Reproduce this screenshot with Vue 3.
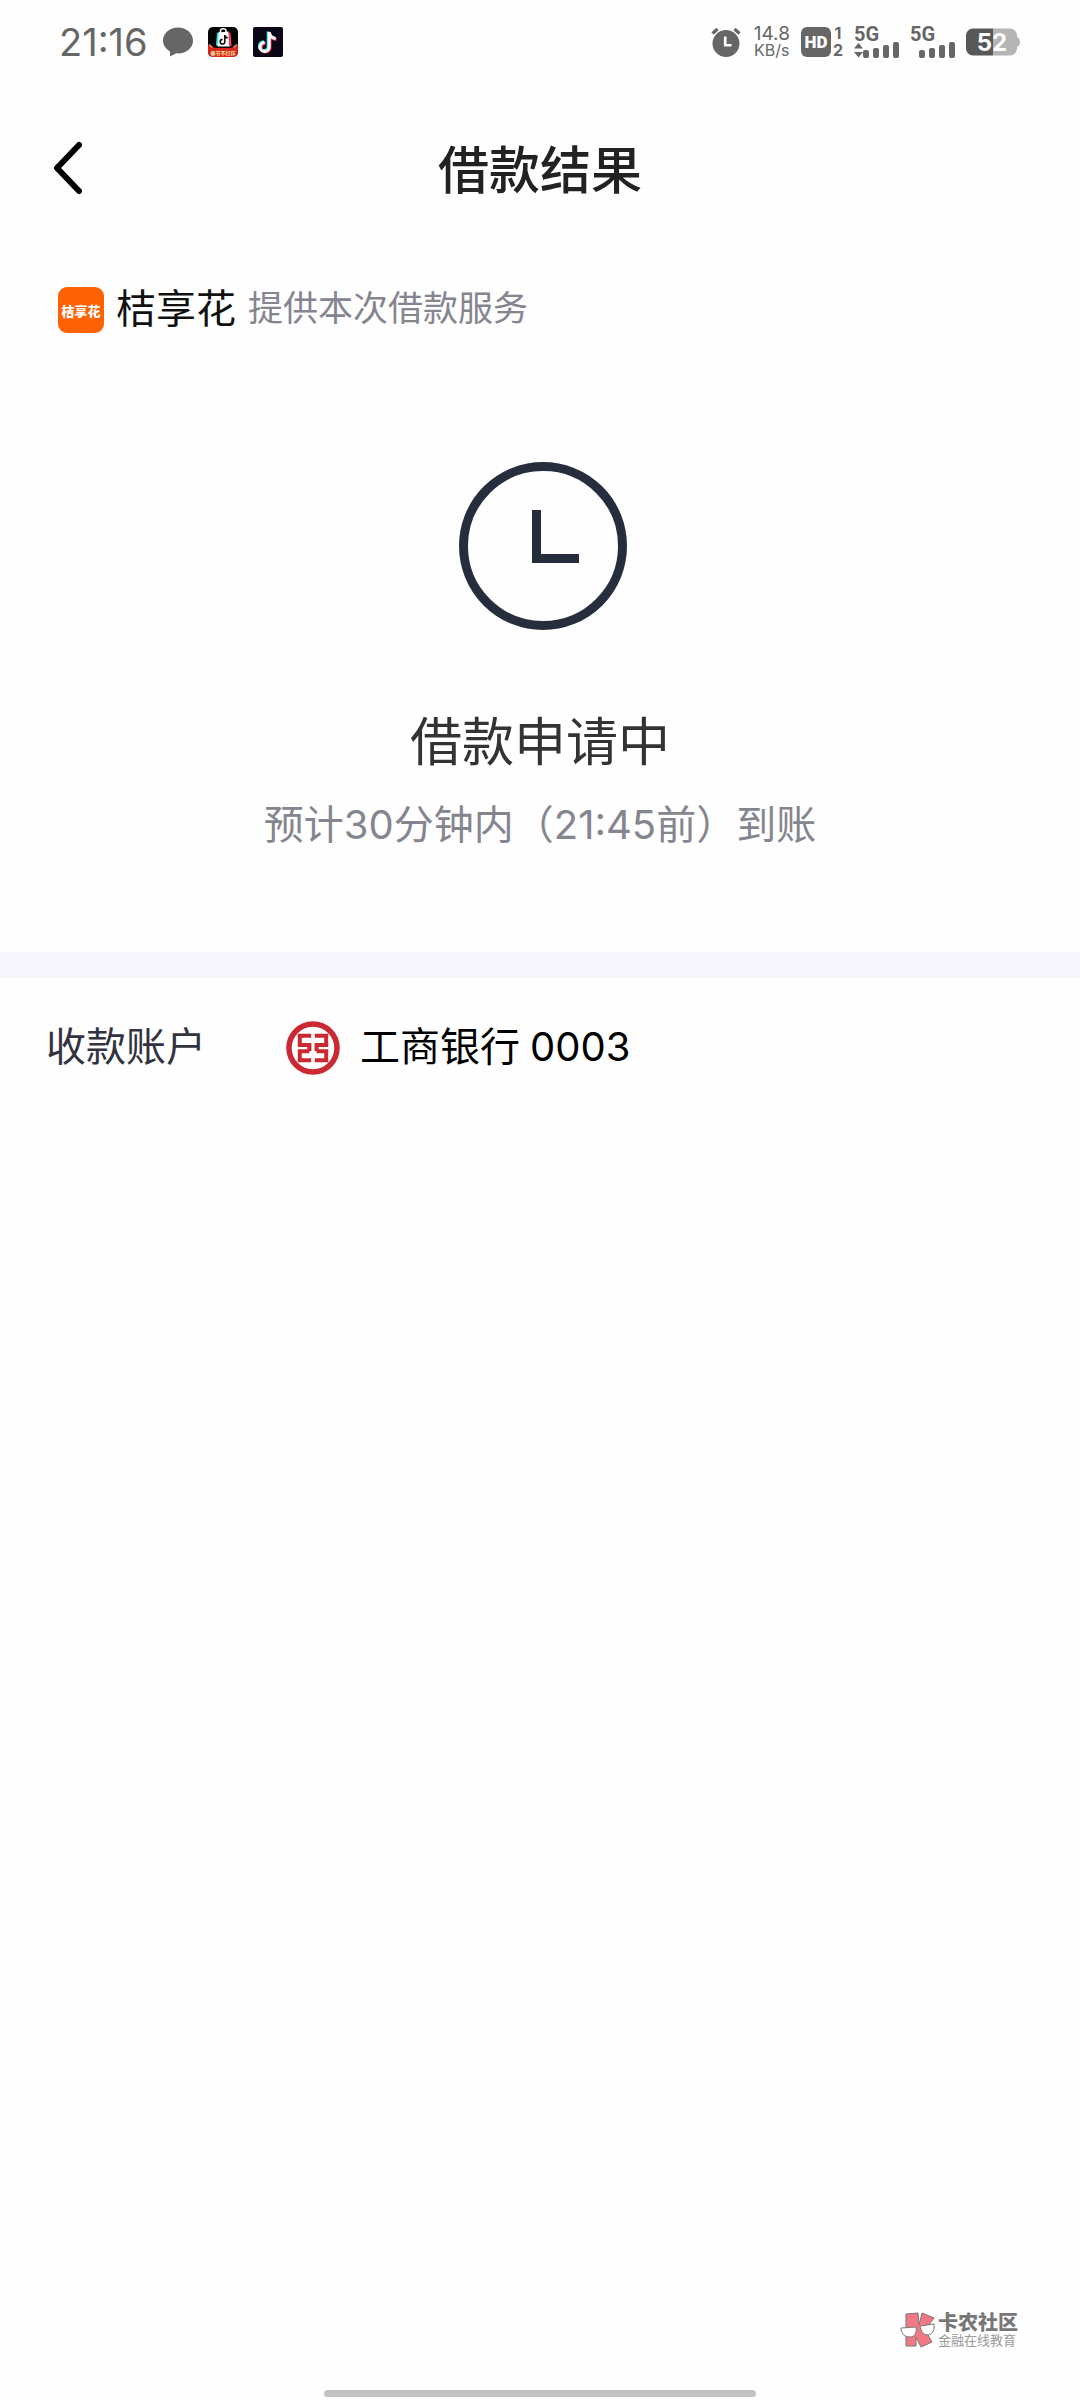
<template>
    <div class="page">
        <div class="status-bar">
            <div class="status-left">
                <span class="time">21:16</span>
                <svg class="app-icon" viewBox="0 0 30 30">
                    <path d="M15 0.5C6.700.5 0 6.300 0 13.500c0 4.500 2.700 8.500 7 10.900V29.500l6.300-3.200C22.600 27.100 30 21.500 30 13.500 30 6.300 23.300.5 15 .5z" fill="#666" />
                </svg>
                <svg class="app-icon" viewBox="0 0 30 30">
                    <rect width="30" height="30" rx="5" fill="#050505" />
                    <path d="M9 6l3-1.500 1 14H8z" fill="#35e6e0" />
                    <path d="M11 5.500l9.500-1 1.500 15H9.500z" fill="#fff" />
                    <path d="M20.500 5l2 1 1 13h-2.500z" fill="#ff3b62" />
                    <path d="M12.500 6V3.500c0-2 5.500-2.500 5.500 0V5.500" fill="none" stroke="#fff" stroke-width="1.500" />
                    <path d="M16.800 8v6.700a2.300 2.300 0 1 1-2.300-2.300M16.800 8.500c.5 1.500 1.500 2.200 3 2.400" fill="none" stroke="#111" stroke-width="1.600" />
                    <path d="M0 18c3 2.500 7 3 15 3s12-.5 15-3V25a5 5 0 0 1-5 5H5a5 5 0 0 1-5-5z" fill="#d8251d" />
                    <path d="M1 17.500l3.500 3M29 17.500l-3.500 3" stroke="#ff8a70" stroke-width="1.500" />
                    <text x="15" y="28" text-anchor="middle" class="ribbon-text">春节不打烊</text>
                </svg>
                <svg class="app-icon" viewBox="0 0 30 30">
                    <rect width="30" height="30" rx="2" fill="#0b0716" />
                    <g fill="none" stroke-width="3">
                        <path d="M15.200 4.500v14.700a4.400 4.400 0 1 1-4.400-4.400M15.200 5c.5 3.500 3 5.700 6.500 6" stroke="#25f4ee" />
                        <path d="M17 6v14.700a4.400 4.400 0 1 1-4.400-4.400M17 6.500c.5 3.500 3 5.700 6.500 6" stroke="#fe2c55" />
                        <path d="M16.200 5v15a4.600 4.600 0 1 1-4.600-4.600M16.200 5.500c.5 3.500 3 5.700 6.500 6" stroke="#fff" />
                    </g>
                </svg>
            </div>
            <div class="status-right">
                <svg class="alarm" viewBox="0 0 30 30">
                    <circle cx="15" cy="16.500" r="13.500" fill="#666" />
                    <path d="M1.500 6.500L6.500 2M28.500 6.500L23.500 2" stroke="#666" stroke-width="3.200" />
                    <path d="M14.200 9.500v8.700h6.300" fill="none" stroke="#fff" stroke-width="2.600" />
                </svg>
                <div class="speed">
                    <span class="speed-num">14.8</span>
                    <span class="speed-unit">KB/s</span>
                </div>
                <div class="hd">
                    <span class="hd-badge">HD</span>
                    <span class="hd-sims"><span>1</span><span>2</span></span>
                </div>
                <div class="signal">
                    <span class="net">5G</span>
                    <svg class="bars" viewBox="0 0 45 16" fill="#666">
                        <path d="M4.500 1l4.500 5.500H0zM4.500 15.500l4.500-5.500H0z" />
                        <rect v-for="bar in bars" :key="bar.x" :x="bar.x" :y="16 - bar.h" width="6" :height="bar.h" rx="2" />
                    </svg>
                </div>
                <div class="signal">
                    <span class="net">5G</span>
                    <svg class="bars" viewBox="0 0 45 16" fill="#666">
                        <rect v-for="bar in bars" :key="bar.x" :x="bar.x" :y="16 - bar.h" width="6" :height="bar.h" rx="2" />
                    </svg>
                </div>
                <svg class="battery" viewBox="0 0 54 28">
                    <path d="M27 0.500h17a7 7 0 0 1 7 7V9c4 1.500 4 8.500 0 10v1.500a7 7 0 0 1-7 7H27z" fill="#b4b4b4" />
                    <path d="M27 .5H7a7 7 0 0 0-7 7v13a7 7 0 0 0 7 7h20z" fill="#585858" />
                    <text x="26" y="23" text-anchor="middle" class="battery-text">52</text>
                </svg>
            </div>
        </div>

        <header class="nav">
            <button class="back" type="button" aria-label="返回">
                <svg viewBox="0 0 32 54" fill="none" stroke="#000" stroke-width="6" stroke-linecap="round" stroke-linejoin="round">
                    <polyline points="27 4 5 27 27 50" />
                </svg>
            </button>
            <h1 class="nav-title">借款结果</h1>
        </header>

        <main>
            <div class="provider">
                <span class="provider-logo">桔享花</span>
                <span class="provider-name">桔享花</span>
                <span class="provider-desc">提供本次借款服务</span>
            </div>

            <section class="result">
                <svg class="result-icon" viewBox="0 0 174 168" fill="none" stroke="#262d3d" stroke-width="9">
                    <circle cx="90" cy="84" r="79.500" />
                    <path d="M83.500 48v48.500H126" />
                </svg>
                <h2 class="result-title">借款申请中</h2>
                <p class="result-desc">预计<span class="num">30</span>分钟内（<span class="num">21:45</span>前）到账</p>
            </section>

            <section class="account">
                <span class="account-label">收款账户</span>
                <svg class="bank-logo" viewBox="0 0 54 54" fill="none" stroke="#cb2832">
                    <circle cx="27" cy="27" r="24" stroke-width="5.500" />
                    <g stroke-width="4">
                        <path d="M25.200 14.800H13.800v9.200h9.600V30M25.200 39.200H13.800V30.200h9.600" />
                        <path d="M28.800 14.800h11.400v9.200h-9.600V30M28.800 39.200h11.400V30.200h-9.600" />
                    </g>
                </svg>
                <span class="bank-name">工商银行 <span class="num">0003</span></span>
            </section>
        </main>

        <footer class="footer">
            <div class="community">
                <svg class="community-logo" viewBox="0 0 36 36" stroke="#777" stroke-width="1">
                    <path d="M6 2l12-1 1 12 3-12 12 5-9 12 7 12-11 5-5-10v9H6z" fill="#f27883" />
                    <path d="M1 16l15-1c1 5-1 10-6 10-6 0-9-4-9-9z" fill="#fff" />
                    <path d="M20 14l14-2c1 6-2 11-6 11-5 0-7-4-8-9z" fill="#fff" />
                </svg>
                <div class="community-text">
                    <span class="community-name">卡农社区</span>
                    <span class="community-slogan">金融在线教育</span>
                </div>
            </div>
            <div class="home-bar"></div>
        </footer>
    </div>
</template>

<script setup>
// 信号格
const bars = [
    { x: 9, h: 8 },
    { x: 19, h: 10 },
    { x: 29, h: 13 },
    { x: 39, h: 16 }
];
</script>

<style>
body {
    margin: 0;
    background: #fefefe;
}
</style>

<style scoped>
.page {
    display: flex;
    flex-direction: column;
    min-height: 100vh;
    background: #fefefe;
    font-family: Roboto, "Noto Sans CJK SC", sans-serif;
    color: #111;
}

/* 数字 */
.num {
    font-family: Inter, sans-serif;
    line-height: 40px;
}

/* 状态栏 */
.status-bar {
    display: flex;
    justify-content: space-between;
    align-items: center;
    height: 84px;
    padding: 0 60px 0 59px;
    color: #666;
}

.status-left {
    display: flex;
    align-items: center;
    gap: 15px;
}

.time {
    font-family: Inter, sans-serif;
    font-size: 38px;
    line-height: 44px;
}

.app-icon {
    width: 30px;
    height: 30px;
}

.ribbon-text {
    font-size: 5px;
    font-weight: 700;
    fill: #ffe9a0;
}

.status-right {
    display: flex;
    align-items: center;
    gap: 11px;
}

.alarm {
    width: 30px;
    height: 30px;
    margin-right: 2px;
}

.speed {
    display: flex;
    flex-direction: column;
    align-items: center;
    font-family: Inter, sans-serif;
    line-height: 17px;
}

.speed-num {
    font-size: 19px;
}

.speed-unit {
    font-size: 16px;
}

.hd {
    display: flex;
    align-items: center;
    gap: 2px;
}

.hd-badge {
    width: 30px;
    border-radius: 6px;
    background: #666;
    color: #fefefe;
    font-size: 17px;
    font-weight: 900;
    line-height: 30px;
    text-align: center;
}

.hd-sims {
    display: flex;
    flex-direction: column;
    align-items: center;
    font-family: Inter, sans-serif;
    font-size: 16px;
    font-weight: 700;
    line-height: 17px;
}

.signal {
    display: flex;
    flex-direction: column;
    width: 45px;
}

.net {
    font-size: 20px;
    font-weight: 700;
    line-height: 16px;
}

.bars {
    width: 45px;
    height: 16px;
}

.battery {
    width: 54px;
    height: 28px;
}

.battery-text {
    font-family: Inter, sans-serif;
    font-size: 24px;
    font-weight: 700;
    fill: #fff;
}

/* 导航栏 */
.nav {
    display: grid;
    grid-template-columns: 80px 1fr 80px;
    align-items: center;
    height: 168px;
    padding: 0 32px 4px;
}

.back {
    display: flex;
    align-items: center;
    height: 80px;
    padding: 0 20px;
    border: none;
    background: none;
    cursor: pointer;
}

.back svg {
    width: 32px;
    height: 54px;
}

.nav-title {
    margin: 0;
    padding-top: 8px;
    font-size: 51px;
    font-weight: 500;
    line-height: 72px;
    text-align: center;
    color: #222;
}

/* 服务方 */
.provider {
    display: flex;
    align-items: center;
    height: 108px;
    padding: 0 58px;
}

.provider-logo {
    display: flex;
    align-items: center;
    justify-content: center;
    width: 46px;
    height: 46px;
    border-radius: 9px;
    background: #ff6203;
    color: #fff;
    font-size: 13px;
    font-weight: 900;
}

.provider-name {
    margin-left: 12px;
    font-size: 40px;
    line-height: 56px;
}

.provider-desc {
    margin-left: 12px;
    font-size: 35px;
    line-height: 56px;
    color: #85858f;
}

/* 借款状态 */
.result {
    display: flex;
    flex-direction: column;
    align-items: center;
    padding: 98px 40px 98px;
    border-bottom: 26px solid #f5f5fb;
}

.result-icon {
    width: 174px;
    height: 168px;
}

.result-title {
    margin: 76px 0 0;
    font-size: 52px;
    font-weight: 400;
    line-height: 76px;
    color: #333;
}

.result-desc {
    margin: 16px 0 0;
    font-size: 40px;
    line-height: 56px;
    color: #85858f;
}

/* 收款账户 */
.account {
    display: flex;
    align-items: center;
    height: 140px;
    padding: 0 46px;
    font-size: 40px;
    line-height: 56px;
}

.account-label {
    width: 240px;
    color: #33333f;
}

.bank-logo {
    width: 54px;
    height: 54px;
}

.bank-name {
    margin-left: 20px;
    color: #000;
}

.footer {
    display: flex;
    flex-direction: column;
    align-items: center;
    margin-top: auto;
    padding-bottom: 3px;
}

.community {
    display: flex;
    align-items: center;
    align-self: flex-end;
    gap: 2px;
    margin: 0 62px 42px 0;
}

.community-logo {
    width: 36px;
    height: 36px;
}

.community-text {
    display: flex;
    flex-direction: column;
}

.community-name {
    font-size: 20px;
    font-weight: 900;
    line-height: 22px;
    color: #777;
}

.community-slogan {
    font-size: 13px;
    line-height: 14px;
    color: #999;
}

.home-bar {
    width: 40%;
    height: 7px;
    border-radius: 4px;
    background: #c2c2c2;
}
</style>
